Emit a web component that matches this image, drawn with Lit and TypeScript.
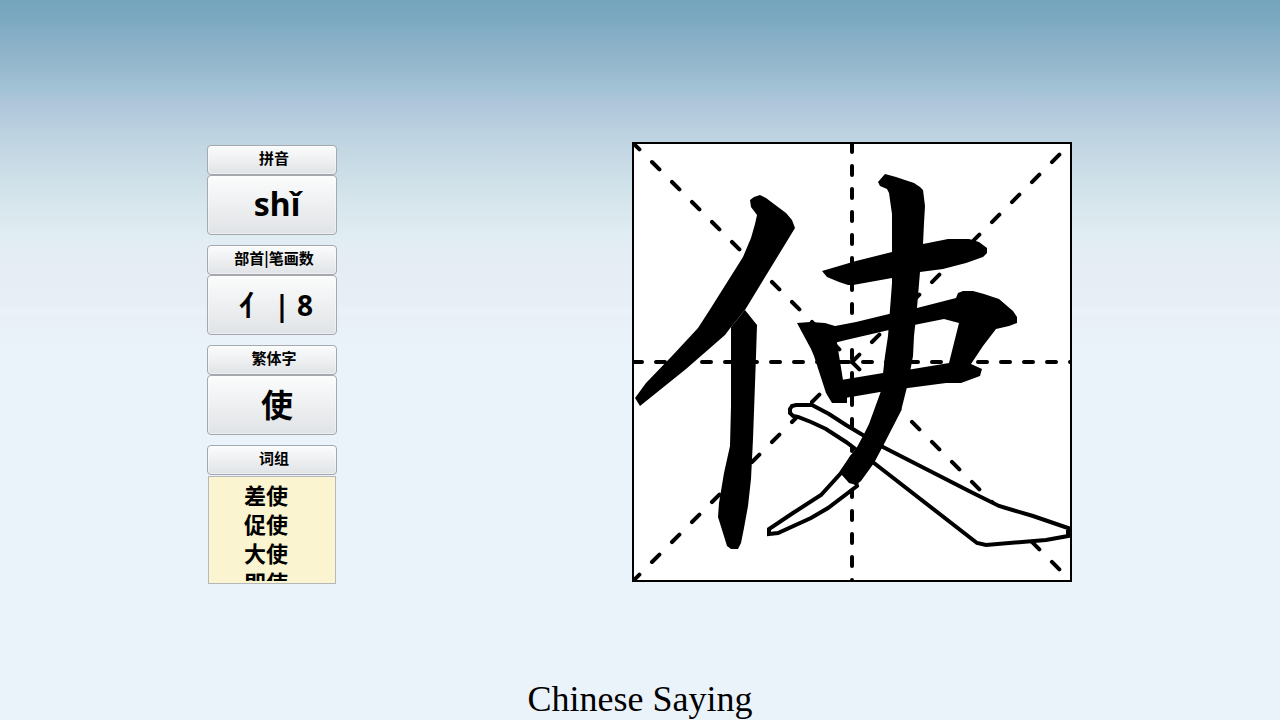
import { LitElement, html, css, svg } from "lit";
import { customElement, property } from "lit/decorators.js";

interface Entry {
  id: string;
  label: string;
  value: string;
}

const ENTRIES: Entry[] = [
  { id: "pinyin", label: "拼音", value: "shǐ" },
  { id: "radical", label: "部首|笔画数", value: "亻 | 8" },
  { id: "traditional", label: "繁体字", value: "使" },
];

const WORDS = ["差使", "促使", "大使", "即使"];

// Strokes that are still to be written, drawn as outlines.
const OUTLINES = [
  "M164 263L180 263L197 272L214 283L251 305L294 327L337 349L367 364L401 374L436 386V394L414 398L354 403L345 401L242 321L214 300L194 287L179 280L166 275L161 274L158 271V267L160 264Z",
  "M218 318L209 331L189 353L161 371L137 387V392L146 391L179 376L196 366L225 344Z",
];

// Strokes already written.
const STROKES = [
  "M118 58L122 55L128 53L134 56L146 65L154 71L160 78L163 86L113 168L99 185L93 193L54 227L8 264L3 256L14 241L40 214L66 186L77 169L111 115L119 96L123 82L125 73L119 65Z",
  "M113 168L125 183L124 214L121 297L119 337L116 364L112 386L109 401L106 407H99L95 404L91 391L86 375L87 361L92 331L98 304L99 264V185Z",
  "M190 129L224 119L260 110L291 102L316 97H337L347 100L355 106V111L351 115L334 121L311 127L288 130L260 136L221 143H216L207 140L195 135Z",
  "M246 40L253 32L264 35L282 41L288 45L291 48L293 64L292 81L291 102L288 130L285 166L282 194L281 214L276 241L269 269L251 304L242 321L229 339L224 343L217 341L209 332V329L218 314L224 307L231 294L237 282L249 249L253 214L256 194L260 141V72L257 51L255 47L248 44Z",
  "M165 181L178 180L193 181L203 184L205 201L211 238L215 254V261H200L194 251L182 214L179 207L172 194Z",
  "M193 181L198 185L224 180L257 172L285 166L324 156L326 151L331 149H341L352 152L367 157L381 169L385 175V181L377 184L364 187L351 204L339 222L350 227L348 234L329 241H314L276 246L248 250L213 256L209 238L251 231L281 227L317 221L327 181L312 177L282 183L257 188L214 198L202 201Z",
];

@customElement("stroke-card")
export class StrokeCard extends LitElement {
  static styles = css`
    :host {
      display: block;
      box-sizing: border-box;
      width: 440px;
      max-width: 100%;
    }
    .card {
      display: block;
      width: 100%;
    }
    .frame {
      fill: #fff;
      stroke: #000;
      stroke-width: 2;
    }
    .guide {
      stroke: #000;
      stroke-width: 4;
      stroke-linecap: round;
      stroke-dasharray: 9 14;
    }
    .diagonal {
      stroke: #000;
      stroke-width: 4;
      stroke-linecap: round;
      stroke-dasharray: 10.5 17.78;
    }
    .outline {
      fill: #fff;
      stroke: #000;
      stroke-width: 4;
    }
  `;

  render() {
    return html`
      <svg class="card" viewBox="0 0 440 440" role="img" aria-label="使">
        <rect class="frame" x="1" y="1" width="438" height="438" />
        <path class="guide" d="M220 1V440" />
        <path class="guide" d="M1 220H440" />
        <path class="diagonal" d="M0 0L429 429" />
        <path class="diagonal" d="M0 440L429 11" />
        ${OUTLINES.map((d) => svg`<path class="outline" d=${d} />`)}
        ${STROKES.map((d) => svg`<path d=${d} />`)}
      </svg>
    `;
  }
}

@customElement("info-entry")
export class InfoEntry extends LitElement {
  @property({ attribute: false }) entry!: Entry;

  static styles = css`
    :host {
      display: flex;
      flex-direction: column;
    }
    .key {
      box-sizing: border-box;
      width: 100%;
      margin: 0;
      border: 1px solid #a5a8ae;
      border-radius: 4px;
      background: linear-gradient(#fbfcfc, #e0e3e6);
      box-shadow: inset 0 0 0 1px rgba(255, 255, 255, 0.4);
      color: #000;
      font-family: inherit;
      font-weight: 700;
      text-align: center;
    }
    .head {
      height: 30px;
      padding: 0 0 4px 4px;
      font-size: 15px;
      line-height: 22px;
    }
    .value {
      height: 60px;
      padding: 0 0 4px 10px;
      font-size: 32px;
      line-height: 52px;
    }
    .pinyin {
      padding-bottom: 2px;
      font-family: "Noto Sans", sans-serif;
    }
    .radical {
      padding: 0 0 0 8px;
      font-family: "Noto Sans", "Noto Sans CJK SC", sans-serif;
      font-size: 28px;
    }
  `;

  render() {
    const { id, label, value } = this.entry;
    return html`
      <button class="key head" type="button">${label}</button>
      ${value ? html`<button class="key value ${id}" type="button">${value}</button>` : ""}
    `;
  }
}

@customElement("app-root")
export class AppRoot extends LitElement {
  static styles = css`
    :host {
      display: flex;
      flex-direction: column;
      box-sizing: border-box;
      min-height: 100vh;
      background: linear-gradient(
        #75a5be 0,
        #7ba9c0 22px,
        #83adc6 30px,
        #90b4ca 54px,
        #a3c2d6 90px,
        #aec5da 102px,
        #bbd1e0 130px,
        #c7dae5 160px,
        #d5e5eb 200px,
        #e0edf3 236px,
        #e4ecf4 248px,
        #e8eef6 304px,
        #ecf2fa 311px,
        #e8eff7 318px,
        #eaf2fa 345px,
        #ebf3fa 100%
      );
      color: #000;
      font-family: "Noto Sans CJK SC", sans-serif;
    }
    .stage {
      display: flex;
      justify-content: space-between;
      align-items: flex-start;
      gap: 24px;
      padding: 142px 208px 0 207px;
    }
    .info {
      display: flex;
      flex-direction: column;
      gap: 10px;
      width: 130px;
      flex: none;
      padding-top: 3px;
    }
    .words {
      height: 108px;
      box-sizing: border-box;
      margin: 1px 1px 0;
      padding-bottom: 2px;
      border: 1px solid #b5b8ba;
      background: #faf5d0;
    }
    .group {
      display: flex;
      flex-direction: column;
    }
    .list {
      height: 100%;
      box-sizing: border-box;
      margin: 0;
      padding: 3px 0 0 35px;
      overflow: hidden;
      list-style: none;
      font-size: 22px;
      font-weight: 700;
      line-height: 29px;
    }
    .title {
      margin: auto 0 0;
      font-family: "Liberation Serif", serif;
      font-size: 36px;
      font-weight: 400;
      line-height: 42px;
      text-align: center;
    }
  `;

  render() {
    return html`
      <main class="stage">
        <section class="info">
          ${ENTRIES.map((e) => html`<info-entry .entry=${e}></info-entry>`)}
          <div class="group">
            <info-entry .entry=${{ id: "words", label: "词组", value: "" }}></info-entry>
            <div class="words">
              <ul class="list">
                ${WORDS.map((w) => html`<li>${w}</li>`)}
              </ul>
            </div>
          </div>
        </section>
        <stroke-card></stroke-card>
      </main>
      <h1 class="title">Chinese Saying</h1>
    `;
  }
}
